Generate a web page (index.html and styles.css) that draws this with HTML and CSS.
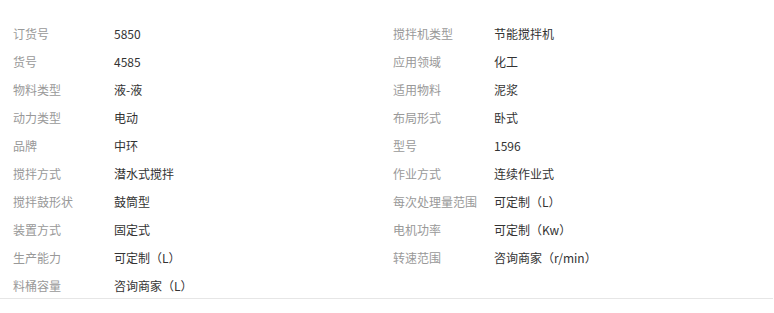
FILE: index.html
```html
<!DOCTYPE html>
<html lang="zh-CN">
<head>
<meta charset="utf-8">
<title>参数</title>
<link rel="stylesheet" href="styles.css">
</head>
<body>
<div class="specs">
  <div class="item"><span class="label">订货号</span><span class="value">5850</span></div>
  <div class="item"><span class="label">搅拌机类型</span><span class="value">节能搅拌机</span></div>
  <div class="item"><span class="label">货号</span><span class="value">4585</span></div>
  <div class="item"><span class="label">应用领域</span><span class="value">化工</span></div>
  <div class="item"><span class="label">物料类型</span><span class="value">液-液</span></div>
  <div class="item"><span class="label">适用物料</span><span class="value">泥浆</span></div>
  <div class="item"><span class="label">动力类型</span><span class="value">电动</span></div>
  <div class="item"><span class="label">布局形式</span><span class="value">卧式</span></div>
  <div class="item"><span class="label">品牌</span><span class="value">中环</span></div>
  <div class="item"><span class="label">型号</span><span class="value">1596</span></div>
  <div class="item"><span class="label">搅拌方式</span><span class="value">潜水式搅拌</span></div>
  <div class="item"><span class="label">作业方式</span><span class="value">连续作业式</span></div>
  <div class="item"><span class="label">搅拌鼓形状</span><span class="value">鼓筒型</span></div>
  <div class="item"><span class="label">每次处理量范围</span><span class="value">可定制（L）</span></div>
  <div class="item"><span class="label">装置方式</span><span class="value">固定式</span></div>
  <div class="item"><span class="label">电机功率</span><span class="value">可定制（Kw）</span></div>
  <div class="item"><span class="label">生产能力</span><span class="value">可定制（L）</span></div>
  <div class="item"><span class="label">转速范围</span><span class="value">咨询商家（r/min）</span></div>
  <div class="item"><span class="label">料桶容量</span><span class="value">咨询商家（L）</span></div>
</div>
</body>
</html>
```

FILE: styles.css
```css
html, body {
  margin: 0;
  padding: 0;
  background: #fff;
}

body {
  font-family: "Noto Sans CJK SC", "Noto Sans", sans-serif;
  font-size: 12px;
}

.specs {
  width: 773px;
  padding-top: 21px;
  padding-bottom: 1px;
  display: grid;
  grid-template-columns: 380px 1fr;
  row-gap: 4px;
  border-bottom: 1px solid #e6e6e6;
}

.item {
  display: flex;
  align-items: center;
  height: 24px;
  padding-left: 13px;
}

.label {
  width: 101px;
  flex-shrink: 0;
  color: #999;
}

.value {
  color: #333;
}
```
